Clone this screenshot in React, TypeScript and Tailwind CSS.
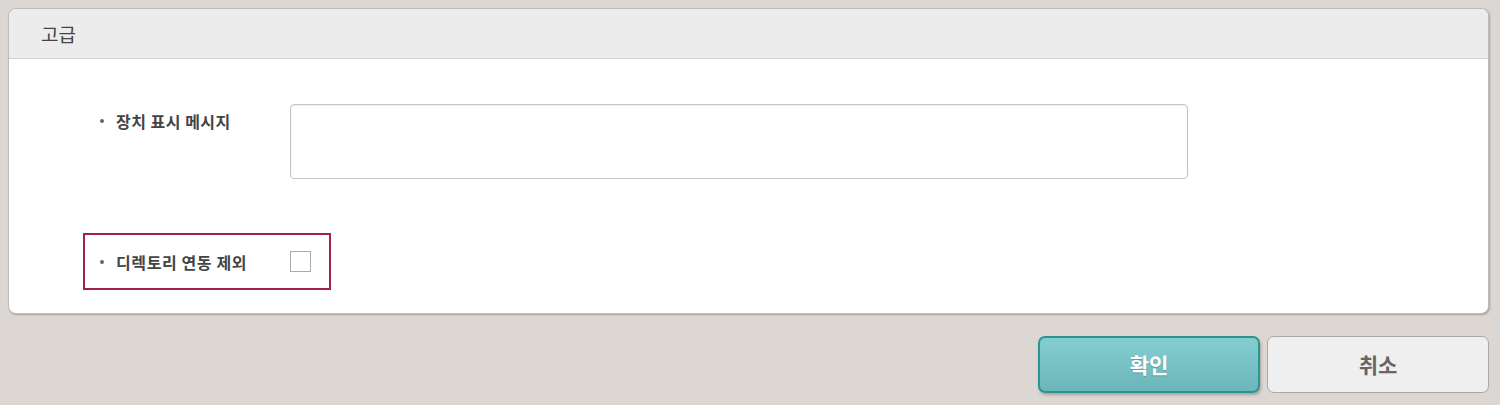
import React from "react";

const font = { fontFamily: '"Noto Sans CJK KR", "Noto Sans", sans-serif' };

export default function App() {
  return (
    <div className="w-[1500px] h-[405px] bg-[#dcd7d3] pt-[8px] pl-[8px] pr-[11px]" style={font}>
      <div className="rounded-[8px] border border-[#bcbcbc] bg-white shadow-[1px_1px_2px_rgba(0,0,0,0.25)] overflow-hidden h-[306px]">
        <div className="h-[50px] bg-[#ececec] border-b border-[#d2d2d2] flex items-center pl-[32px]">
          <span className="text-[19px] text-[#444] leading-none">고급</span>
        </div>
        <div className="pl-[74px] pt-[43px]">
          <div className="flex items-start border-2 border-transparent w-fit">
            <div className="w-[205px] pl-[15px] pt-[6px] flex items-center">
              <span className="w-[4px] h-[4px] rounded-full bg-[#666] mr-[12px]" />
              <span className="text-[16px] font-bold text-[#444] leading-[22px] tracking-[0.5px]">장치 표시 메시지</span>
            </div>
            <div className="w-[898px] h-[75px] rounded-[4px] border border-[#c4c4c4] bg-white shadow-[inset_0_1px_2px_rgba(0,0,0,0.08)]" />
          </div>
          <div className="mt-[52px] w-[248px] h-[57px] border-2 border-[#a3214a] flex items-center">
            <div className="w-[205px] pl-[15px] flex items-center">
              <span className="w-[4px] h-[4px] rounded-full bg-[#666] mr-[12px]" />
              <span className="text-[16px] font-bold text-[#444] leading-[22px] tracking-[0.6px]">디렉토리 연동 제외</span>
            </div>
            <div className="w-[21px] h-[21px] border border-[#aaa] bg-white" />
          </div>
        </div>
      </div>
      <div className="flex justify-end gap-[7px] mt-[22px]">
        <button className="w-[222px] h-[57px] rounded-[7px] border-2 border-[#2a958f] bg-gradient-to-b from-[#84cdd0] to-[#6cb6b9] text-white text-[21px] font-bold shadow-[1px_2px_3px_rgba(0,0,0,0.25)] [text-shadow:0_1px_1px_rgba(0,0,0,0.2)]" style={font}>
          확인
        </button>
        <button className="w-[222px] h-[57px] rounded-[7px] border border-[#a8a8a8] bg-[#efefef] text-[#666] text-[21px] font-bold" style={font}>
          취소
        </button>
      </div>
    </div>
  );
}
